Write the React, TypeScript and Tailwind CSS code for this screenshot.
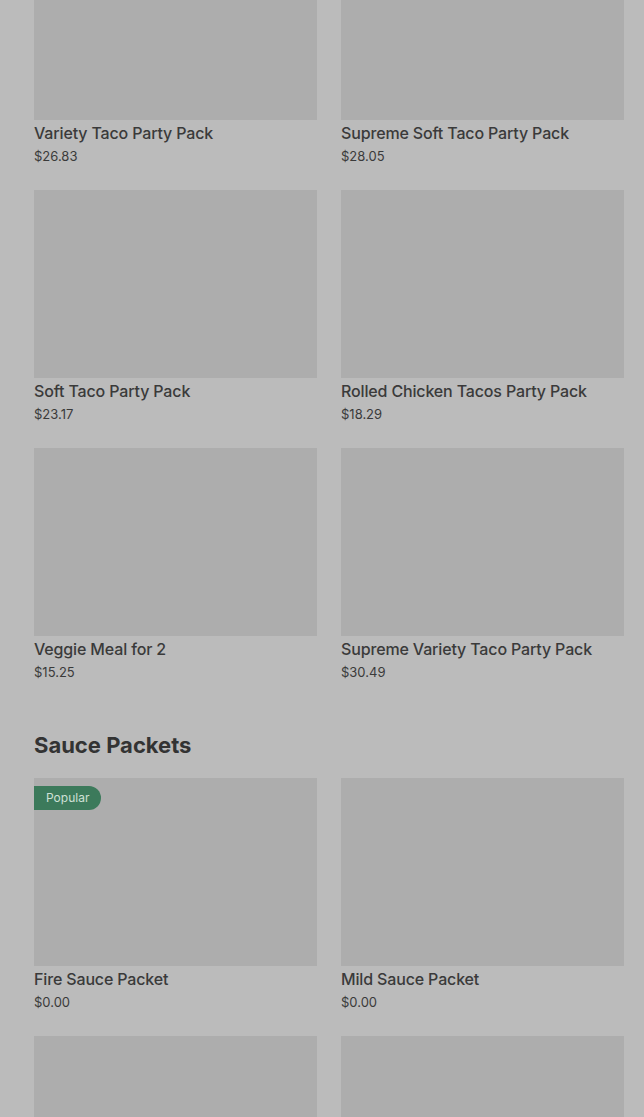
import React from 'react';

type Item = { name: string; price: string; badge?: string };

const packs: Item[] = [
  { name: 'Variety Taco Party Pack', price: '$26.83' },
  { name: 'Supreme Soft Taco Party Pack', price: '$28.05' },
  { name: 'Soft Taco Party Pack', price: '$23.17' },
  { name: 'Rolled Chicken Tacos Party Pack', price: '$18.29' },
  { name: 'Veggie Meal for 2', price: '$15.25' },
  { name: 'Supreme Variety Taco Party Pack', price: '$30.49' },
];

const sauces: Item[] = [
  { name: 'Fire Sauce Packet', price: '$0.00', badge: 'Popular' },
  { name: 'Mild Sauce Packet', price: '$0.00' },
  { name: 'Hot Sauce Packet', price: '$0.00' },
  { name: 'Diablo Sauce Packet', price: '$0.00' },
];

function Card({ item }: { item: Item }) {
  return (
    <div>
      <div className="relative h-[188px] bg-[#adadad]">
        {item.badge && (
          <span className="absolute left-0 top-2 h-6 pl-3 pr-3 rounded-r-full bg-[#3c7a5b] text-[#cfe0d6] text-[12px] leading-6">
            {item.badge}
          </span>
        )}
      </div>
      <div className="text-[16px] leading-[26px] font-medium text-[#3a3a3a] tracking-[-0.15px]">{item.name}</div>
      <div className="text-[13px] leading-5 text-[#3a3a3a]">{item.price}</div>
    </div>
  );
}

export default function App() {
  return (
    <div className="h-[1117px] bg-[#bbbbbb] overflow-hidden" style={{ fontFamily: 'Inter, "Liberation Sans", sans-serif' }}>
      <div className="pl-[34px] pr-5 -mt-[68px]">
        <div className="grid grid-cols-2 gap-x-6 gap-y-6">
          {packs.map((p) => (
            <Card key={p.name} item={p} />
          ))}
        </div>

        <h2 className="pt-[47px] pb-[17px] text-[22px] leading-8 font-bold text-[#333333]">
          Sauce Packets
        </h2>

        <div className="grid grid-cols-2 gap-x-6 gap-y-6">
          {sauces.map((p) => (
            <Card key={p.name} item={p} />
          ))}
        </div>
      </div>
    </div>
  );
}
